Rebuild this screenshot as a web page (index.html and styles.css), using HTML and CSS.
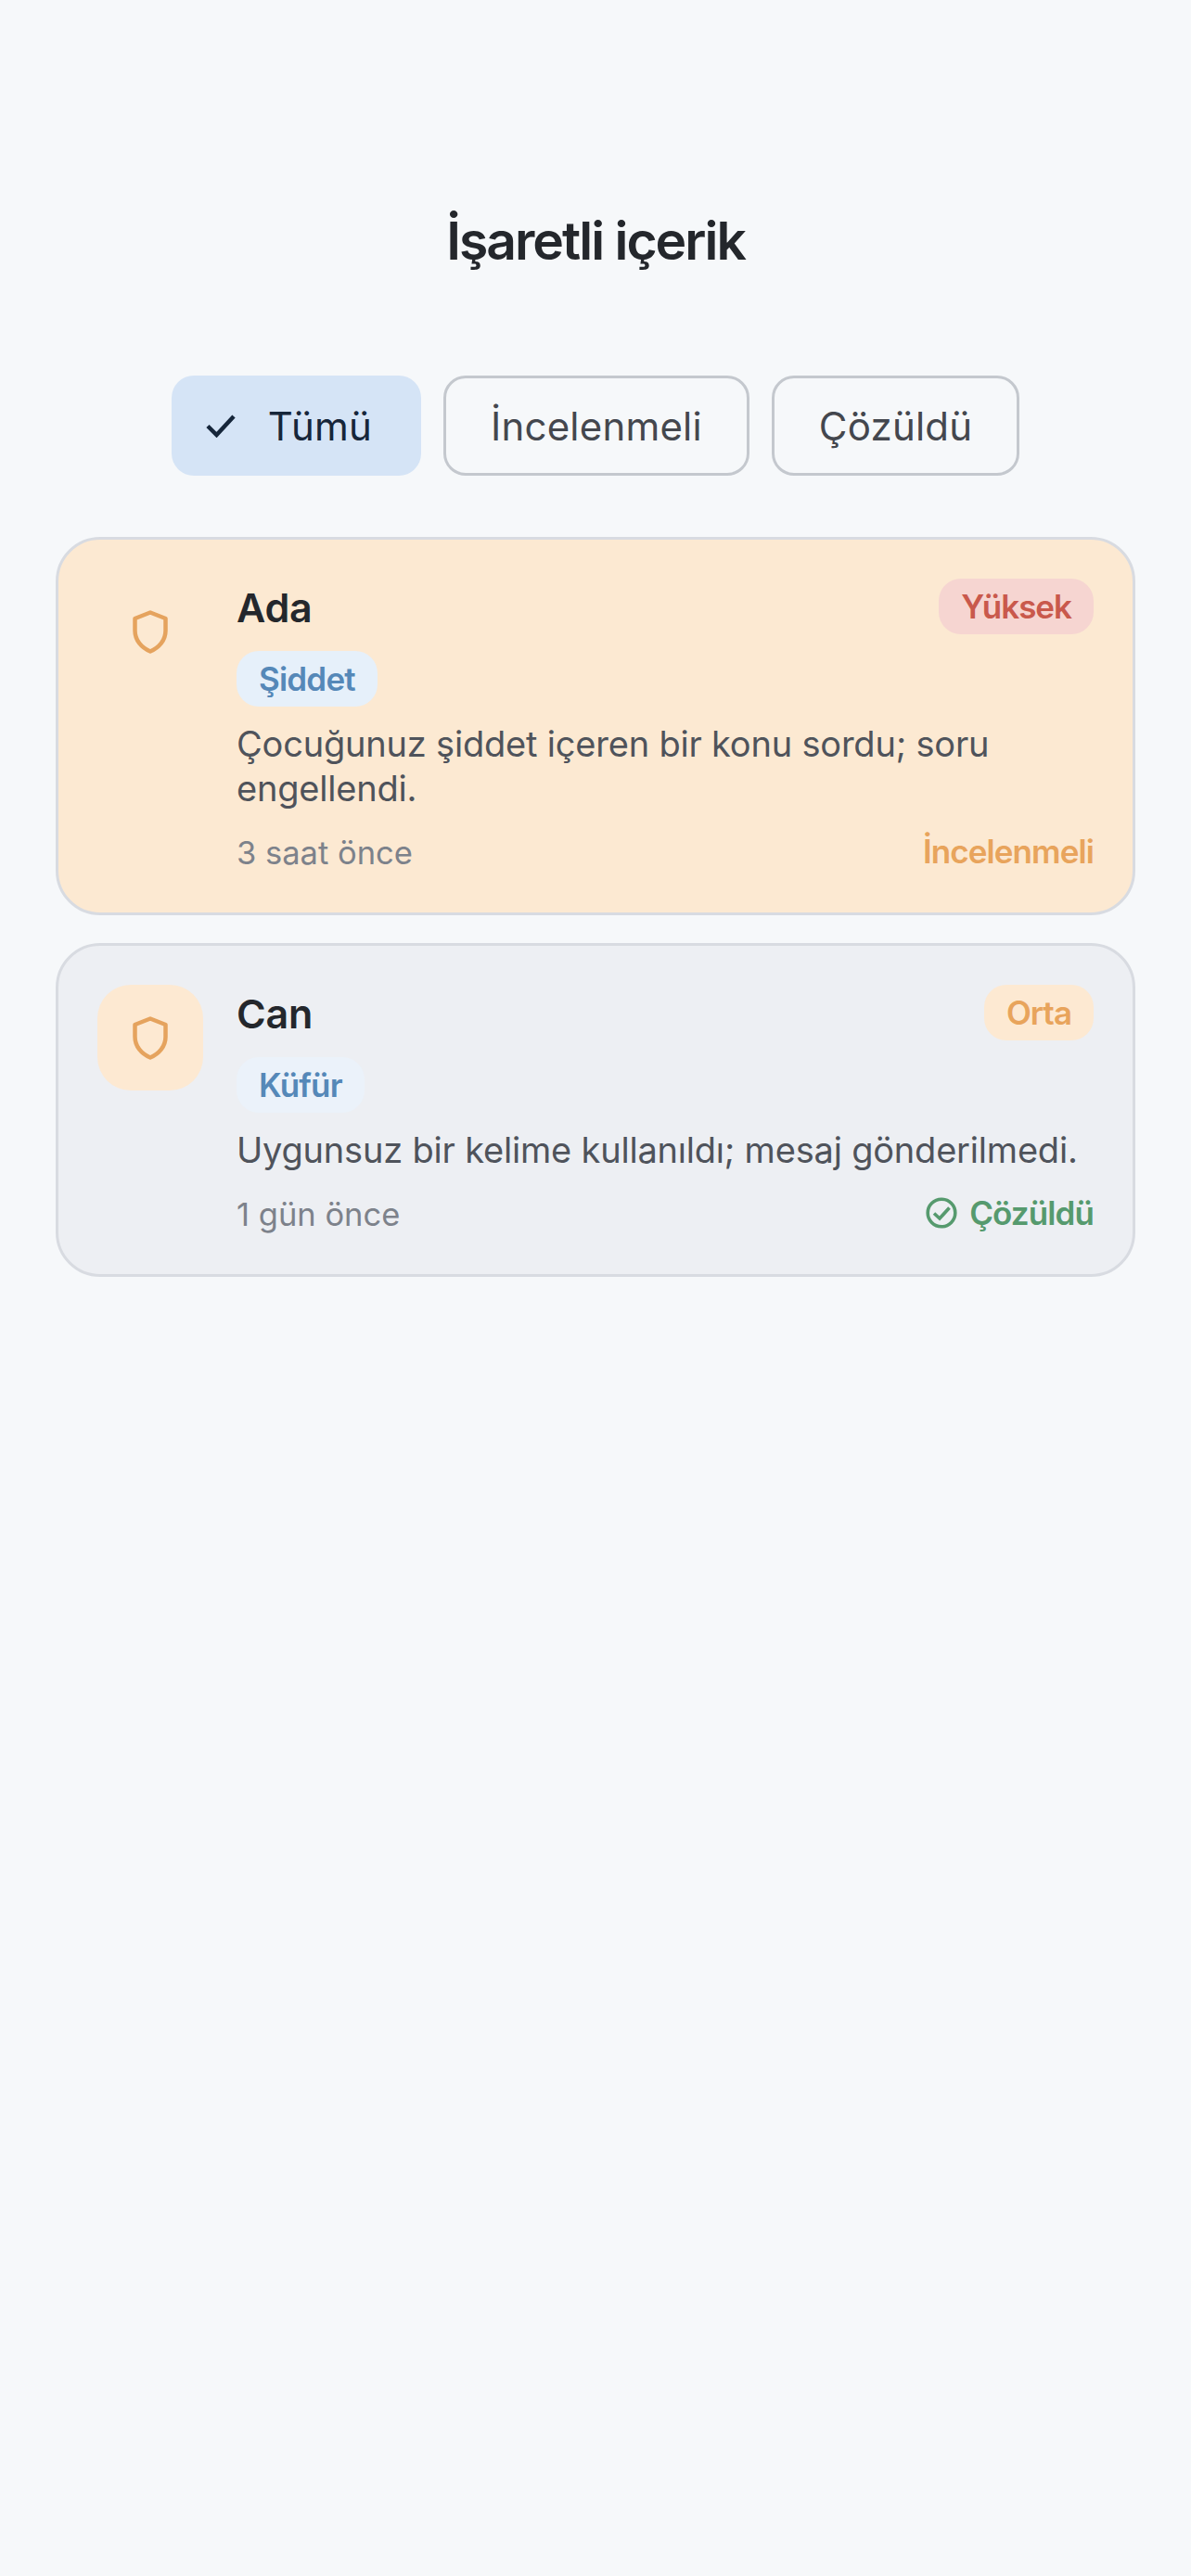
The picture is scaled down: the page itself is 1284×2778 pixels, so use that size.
FILE: index.html
```html
<!DOCTYPE html>
<html lang="tr">
<head>
    <meta charset="UTF-8">
    <meta name="viewport" content="width=device-width, initial-scale=1.0">
    <title>İşaretli içerik</title>
    <link rel="stylesheet" href="styles.css">
</head>
<body>
    <div class="page">
        <h1 class="title">İşaretli içerik</h1>

        <div class="filters">
            <button class="chip chip-active">
                <svg class="chip-check" viewBox="0 0 32 26" width="32" height="26">
                    <path d="M2 13.5 L11.5 23 L30 3" fill="none" stroke="#16263a" stroke-width="4.5"/>
                </svg>
                Tümü
            </button>
            <button class="chip">İncelenmeli</button>
            <button class="chip">Çözüldü</button>
        </div>

        <div class="list">
            <div class="card card-open">
                <div class="icon-box">
                    <svg viewBox="0 0 38 47" width="38" height="47">
                        <path d="M19 2.5 L35.5 9 V22 C35.5 32.5 28.5 40.5 19 44.5 C9.500 40.5 2.500 32.5 2.500 22 V9 Z" fill="none" stroke="#e5a35e" stroke-width="4.500" stroke-linejoin="round"/>
                    </svg>
                </div>
                <div class="card-body">
                    <div class="card-top">
                        <span class="name">Ada</span>
                        <span class="badge badge-high">Yüksek</span>
                    </div>
                    <div class="tag-row"><span class="tag">Şiddet</span></div>
                    <p class="desc">Çocuğunuz şiddet içeren bir konu sordu; soru engellendi.</p>
                    <div class="card-foot">
                        <span class="time">3 saat önce</span>
                        <span class="status status-open">İncelenmeli</span>
                    </div>
                </div>
            </div>

            <div class="card card-done">
                <div class="icon-box icon-box-fill">
                    <svg viewBox="0 0 38 47" width="38" height="47">
                        <path d="M19 2.5 L35.5 9 V22 C35.5 32.5 28.5 40.5 19 44.5 C9.500 40.5 2.500 32.5 2.500 22 V9 Z" fill="none" stroke="#e5a35e" stroke-width="4.500" stroke-linejoin="round"/>
                    </svg>
                </div>
                <div class="card-body">
                    <div class="card-top">
                        <span class="name">Can</span>
                        <span class="badge badge-mid">Orta</span>
                    </div>
                    <div class="tag-row"><span class="tag tag-light">Küfür</span></div>
                    <p class="desc">Uygunsuz bir kelime kullanıldı; mesaj gönderilmedi.</p>
                    <div class="card-foot">
                        <span class="time">1 gün önce</span>
                        <span class="status status-done">
                            <svg viewBox="0 0 34 34" width="34" height="34">
                                <circle cx="17" cy="17" r="14.800" fill="none" stroke="#569a6e" stroke-width="3.600"/>
                                <path d="M9 17.500 L15 23 L25.500 11.500" fill="none" stroke="#569a6e" stroke-width="3.600"/>
                            </svg>
                            Çözüldü
                        </span>
                    </div>
                </div>
            </div>
        </div>
    </div>
</body>
</html>
```
FILE: styles.css
```css
body {
    font-family: Inter, "Noto Sans", sans-serif;
    margin: 0;
    background-color: #f6f8fa;
    color: #24272c;
}
.page {
    min-height: 2778px;
    box-sizing: border-box;
    padding: 0 60px;
}
.title {
    margin: 0;
    padding-top: 224px;
    height: 405px;
    box-sizing: border-box;
    text-align: center;
    font-size: 57px;
    line-height: 72px;
    font-weight: 600;
    letter-spacing: -2px;
    color: #24272c;
}
.filters {
    display: flex;
    justify-content: center;
    gap: 24px;
}
.chip {
    display: flex;
    align-items: center;
    height: 108px;
    box-sizing: border-box;
    padding: 0 48px;
    background: transparent;
    border: 3px solid #c4c8ce;
    border-radius: 24px;
    font-family: inherit;
    font-size: 42px;
    letter-spacing: 0.2px;
    color: #44474e;
}
.chip-active {
    padding: 0 53px 0 37px;
    border: none;
    background-color: #d5e4f6;
    color: #16263a;
}
.chip-check {
    margin-right: 35px;
}
.list {
    display: flex;
    flex-direction: column;
    gap: 30px;
    margin-top: 66px;
}
.card {
    display: flex;
    gap: 36px;
    padding: 42px;
    border: 3px solid #d8dbe1;
    border-radius: 48px;
}
.card-open {
    background-color: #fce9d2;
}
.card-done {
    background-color: #edeff3;
}
.icon-box {
    display: flex;
    align-items: center;
    justify-content: center;
    flex: none;
    width: 114px;
    height: 114px;
    border-radius: 36px;
}
.icon-box-fill {
    background-color: #fde9d2;
}
.card-body {
    display: flex;
    flex-direction: column;
    gap: 18px;
    flex: 1;
    min-width: 0;
}
.card-top, .card-foot {
    display: flex;
    justify-content: space-between;
    align-items: center;
}
.name {
    padding-top: 3px;
    font-size: 43px;
    line-height: 57px;
    font-weight: 600;
    letter-spacing: -0.2px;
    color: #24272c;
}
.badge {
    height: 60px;
    padding: 0 24px;
    border-radius: 24px;
    font-size: 35px;
    line-height: 60px;
    font-weight: 600;
    letter-spacing: -1px;
}
.badge-high {
    background-color: #f6d5d1;
    color: #c9594c;
}
.badge-mid {
    background-color: #fde9d2;
    color: #e8a45c;
}
.tag-row {
    display: flex;
}
.tag {
    height: 60px;
    padding: 0 24px;
    border-radius: 24px;
    background-color: #e6f0fa;
    color: #5588b8;
    font-size: 35px;
    line-height: 60px;
    font-weight: 600;
    letter-spacing: -0.8px;
}
.tag-light {
    background-color: #ebf2fa;
}
.desc {
    margin: -2px 0 2px;
    font-size: 38px;
    line-height: 48px;
    letter-spacing: -0.2px;
    color: #4f535b;
}
.card-foot {
    height: 48px;
}
.time {
    padding-top: 3px;
    font-size: 34.5px;
    color: #7d828b;
}
.status {
    display: flex;
    align-items: center;
    gap: 13px;
    font-size: 35px;
    font-weight: 600;
    letter-spacing: -0.9px;
}
.status-open {
    color: #e8a45c;
}
.status-done {
    color: #569a6e;
}
```
